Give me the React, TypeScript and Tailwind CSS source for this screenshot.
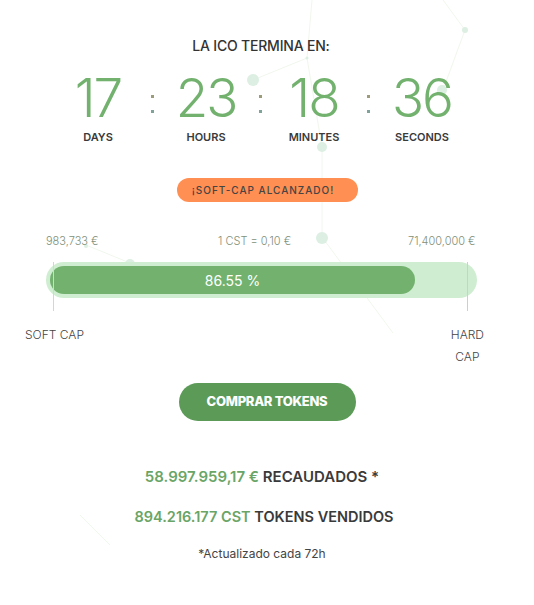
import React from "react";

const units = [
  { v: "17", l: "DAYS" },
  { v: "23", l: "HOURS" },
  { v: "18", l: "MINUTES" },
  { v: "36", l: "SECONDS" },
];

function Decor() {
  return (
    <svg className="absolute inset-0 pointer-events-none" width="534" height="605" viewBox="0 0 534 605">
      <g stroke="#f0f7ec" strokeWidth="1" fill="none">
        <line x1="312" y1="0" x2="307" y2="58" />
        <line x1="307" y1="58" x2="253" y2="80" />
        <line x1="307" y1="58" x2="322" y2="147" />
        <line x1="443" y1="0" x2="465" y2="30" />
        <line x1="465" y1="30" x2="443" y2="90" />
        <line x1="322" y1="237" x2="393" y2="333" />
        <line x1="86" y1="245" x2="130" y2="263" />
        <line x1="322" y1="147" x2="322" y2="237" />
        <line x1="80" y1="515" x2="110" y2="545" />
      </g>
      <g fill="#dcefe2">
        <circle cx="253" cy="80" r="6" />
        <circle cx="307" cy="58" r="1.5" />
        <circle cx="465" cy="30" r="3" />
        <circle cx="442" cy="90" r="5" />
        <circle cx="322" cy="147" r="5" />
        <circle cx="322" cy="238" r="6" />
        <circle cx="130" cy="264" r="5" />
        <circle cx="86" cy="246" r="2" />
      </g>
    </svg>
  );
}

export default function App() {
  return (
    <div
      className="relative w-[534px] h-[605px] bg-white overflow-hidden text-[#333]"
      style={{ fontFamily: "Inter, 'Noto Sans', sans-serif" }}
    >
      <Decor />
      <div className="relative flex flex-col items-center">
        <div className="mt-[37px] text-[14px] font-medium leading-[18px] tracking-[-0.2px] text-[#333] pr-[12px]">
          LA ICO TERMINA EN:
        </div>

        <div className="self-start flex pl-[54px] mt-[16px]">
          {units.map((u, i) => (
            <React.Fragment key={u.l}>
              {i > 0 && (
                <div className="w-[20px] flex flex-col items-center pt-[24px] gap-[12px]">
                  <span className="w-[3px] h-[3px] bg-[#9c9c7a]" />
                  <span className="w-[3px] h-[3px] bg-[#7fa39a]" />
                </div>
              )}
              <div className="w-[88px] flex flex-col items-center">
                <div className="text-[53px] font-light leading-[54px] text-[#72b26e] tracking-[-2px]">
                  {u.v}
                </div>
                <div className="mt-[5px] text-[11px] font-semibold leading-[14px] text-[#3a3a3a]">
                  {u.l}
                </div>
              </div>
            </React.Fragment>
          ))}
        </div>

        <div className="mt-[34px] w-[181px] h-[24px] rounded-full bg-[#ff8f52] flex items-center justify-center pr-[8px]">
          <span className="text-[10px] font-medium tracking-[1px] text-[#444]">¡SOFT-CAP ALCANZADO!</span>
        </div>

        <div className="self-stretch relative mt-[31px] h-[14px] text-[11px] font-light text-[#80907a]">
          <span className="absolute left-[46px] top-0">983,733 €</span>
          <span className="absolute left-[218px] top-0">1 CST = 0,10 €</span>
          <span className="absolute left-[408px] top-0">71,400,000 €</span>
        </div>

        <div className="self-stretch relative mt-[15px] pl-[46px] pr-[57px]">
          <div className="relative h-[36px] rounded-full bg-[#cfedd0] p-[4px] pr-[62px]">
            <div className="h-[28px] rounded-full bg-[#72b26e] flex items-center justify-center">
              <span className="text-[14px] text-white font-normal">86.55 %</span>
            </div>
            <span className="absolute left-[7px] top-0 h-[49px] w-[1px] bg-[#bfe3c4]" />
            <span className="absolute left-[421px] top-0 h-[49px] w-[1px] bg-[#b9dcbf]" />
          </div>
        </div>

        <div className="self-stretch flex justify-between mt-[26px] text-[12px] font-light text-[#444] leading-[22px]">
          <span className="ml-[25px]">SOFT CAP</span>
          <span className="mr-[50px] text-center">
            HARD
            <br />
            CAP
          </span>
        </div>

        <button className="mt-[15px] w-[177px] h-[38px] rounded-full bg-[#5b9a57] text-white text-[13px] font-extrabold tracking-[-0.3px]">
          COMPRAR TOKENS
        </button>

        <div className="mt-[47px] pr-[10px] text-[15px] font-semibold text-[#3a3a3a] leading-[18px]">
          <span className="text-[#6aa566]">58.997.959,17 €</span> RECAUDADOS *
        </div>
        <div className="mt-[22px] pr-[6px] text-[14.5px] font-semibold text-[#3a3a3a] leading-[18px]">
          <span className="text-[#6aa566]">894.216.177 CST</span> TOKENS VENDIDOS
        </div>
        <div className="mt-[20px] pr-[10px] text-[12px] text-[#444] leading-[16px]">*Actualizado cada 72h</div>
      </div>
    </div>
  );
}
